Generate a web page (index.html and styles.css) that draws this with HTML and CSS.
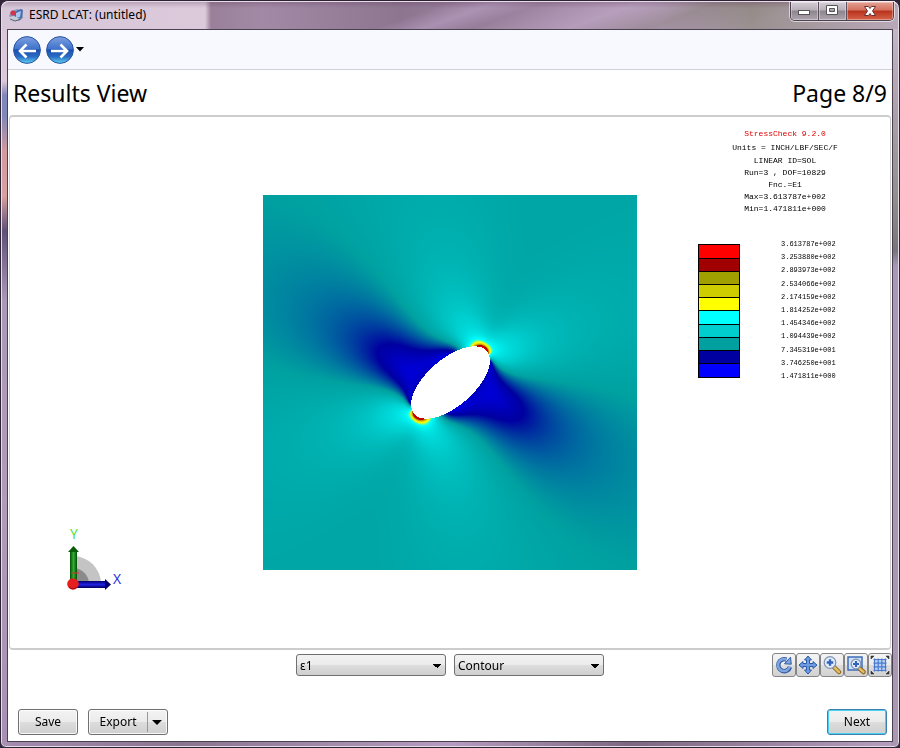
FILE: index.html
```html
<!DOCTYPE html>
<html lang="en">
<head>
<meta charset="utf-8">
<title>ESRD LCAT: (untitled)</title>
<link rel="stylesheet" href="styles.css">
</head>
<body>
<div class="window">
  <header class="titlebar">
    <svg class="app-icon" viewBox="0 0 16 16" aria-hidden="true">
      <path d="M1 9l2-5 6-2 5 1 1 8-4 3-7 0z" fill="#8b9cc0"/>
      <path d="M6 5l7-3 2 1-1 8-7 2z" fill="#4a6cae"/>
      <path d="M8 6l5-2-1 6-4 1z" fill="#a9c6ee"/>
      <path d="M1 10l5-1 6 3-5 3-4-1z" fill="#c6cad4"/>
      <circle cx="5" cy="6" r="2.6" fill="#d43348"/>
      <path d="M2 12l5 2 6-2" fill="none" stroke="#5b6278"/>
    </svg>
    <span class="window-title">ESRD LCAT: (untitled)</span>
    <div class="caption-buttons">
      <button type="button" class="caption" aria-label="Minimize"><svg viewBox="0 0 26 18"><rect x="7.500" y="8.500" width="11" height="4" fill="#fff" stroke="#555"/></svg></button>
      <button type="button" class="caption" aria-label="Maximize"><svg viewBox="0 0 26 18"><path d="M7.500 3.500h11v9h-11zM10.500 6.500v3h5v-3z" fill="#fff" fill-rule="evenodd" stroke="#555"/></svg></button>
      <button type="button" class="caption close" aria-label="Close"><svg viewBox="0 0 46 18"><path d="M17.500 4.500h4l1.500 2 1.500-2h4l-3 4.500 3 4.500h-4l-1.500-2-1.500 2h-4l3-4.500z" fill="#fff" stroke="#633"/></svg></button>
    </div>
  </header>
  <main class="client">
    <nav class="toolbar">
      <button type="button" class="nav-button" aria-label="Back">
        <svg viewBox="0 0 28 28">
          <defs>
            <linearGradient id="orb" x1="0" y1="0" x2="0" y2="1"><stop offset="0" stop-color="#7f9fe0"/><stop offset=".45" stop-color="#3f74cc"/><stop offset=".5" stop-color="#1b4fae"/><stop offset=".75" stop-color="#2a6cc4"/><stop offset="1" stop-color="#62d4f4"/></linearGradient>
          </defs>
          <circle cx="14" cy="14" r="13.400" fill="url(#orb)" stroke="#2b55a0"/>
          <path d="M23 15H7M13.500 8.500L7 15l6.500 6.500" fill="none" stroke="#fff" stroke-width="2.600"/>
        </svg>
      </button>
      <button type="button" class="nav-button" aria-label="Forward">
        <svg viewBox="0 0 28 28">
          <circle cx="14" cy="14" r="13.400" fill="url(#orb)" stroke="#2b55a0"/>
          <path d="M5 15h16M14.500 8.500L21 15l-6.500 6.500" fill="none" stroke="#fff" stroke-width="2.600"/>
        </svg>
      </button>
      <button type="button" class="history" aria-label="Recent pages"><svg viewBox="0 0 8 5"><path d="M0 0h8L4 4.500z"/></svg></button>
    </nav>
    <div class="heading">
      <h1>Results View</h1>
      <span>Page 8/9</span>
    </div>
    <section class="viewport" aria-label="Model view">
      <div class="side-left">
        <svg class="triad" viewBox="0 0 70 70" role="img" aria-label="X and Y axes">
          <defs>
            <linearGradient id="gy"><stop offset="0" stop-color="#064d06"/><stop offset=".5" stop-color="#2fae2f"/><stop offset="1" stop-color="#064d06"/></linearGradient>
            <linearGradient id="gx" x1="0" y1="0" x2="0" y2="1"><stop offset="0" stop-color="#000070"/><stop offset=".5" stop-color="#2020e0"/><stop offset="1" stop-color="#000060"/></linearGradient>
          </defs>
          <path d="M13 29a28 28 0 0 1 28 28H13z" fill="#c4c4c4"/>
          <path d="M13 41a16 16 0 0 1 16 16H13z" fill="#8b8b8b"/>
          <rect x="10" y="24" width="7" height="30" fill="url(#gy)"/>
          <path d="M8 25L13.500 19l5.500 6z" fill="#0a5c0a"/>
          <rect x="17" y="54" width="28" height="7" fill="url(#gx)"/>
          <path d="M45 52L51 57.500l-6 5.500z" fill="#00006c"/>
          <path d="M11 46h8" stroke="#d33" stroke-width="1"/>
          <circle cx="13" cy="57" r="5.800" fill="#e61e1e"/>
          <path d="M9 60a5.500 5.500 0 0 0 8 0" fill="none" stroke="#a01010"/>
          <text x="10" y="12" class="axis axis-y">Y</text>
          <text x="53" y="57" class="axis axis-x">X</text>
        </svg>
      </div>
      <canvas id="field" width="374" height="375" role="img" aria-label="Strain contour around an elliptical hole"></canvas>
      <div class="side-right">
        <div class="info">
          <p class="product">StressCheck 9.2.0</p>
          <p class="units">Units = INCH/LBF/SEC/F</p>
          <p>LINEAR ID=SOL</p>
          <p>Run=3 , DOF=10829</p>
          <p>Fnc.=E1</p>
          <p>Max=3.613787e+002</p>
          <p>Min=1.471811e+000</p>
        </div>
        <div class="legend">
          <div class="swatches">
            <i class="c0"></i><i class="c1"></i><i class="c2"></i><i class="c3"></i><i class="c4"></i><i class="c5"></i><i class="c6"></i><i class="c7"></i><i class="c8"></i><i class="c9"></i>
          </div>
          <div class="levels">
            <span>3.613787e+002</span><span>3.253880e+002</span><span>2.893973e+002</span><span>2.534066e+002</span><span>2.174159e+002</span><span>1.814252e+002</span><span>1.454346e+002</span><span>1.094439e+002</span><span>7.345319e+001</span><span>3.746250e+001</span><span>1.471811e+000</span>
          </div>
        </div>
      </div>
    </section>
    <div class="controls">
      <div class="selects">
        <select aria-label="Function"><option>ε1</option></select>
        <select aria-label="Plot type"><option>Contour</option></select>
      </div>
      <div class="view-tools">
        <button type="button" aria-label="Rotate"><svg viewBox="0 0 20 20"><path d="M12.500 4.600A6 6 0 1 0 16 12" fill="none" stroke="#2f5a9e" stroke-width="4.400"/><path d="M12.500 4.600A6 6 0 1 0 15.800 11.500" fill="none" stroke="#7fa6e0" stroke-width="2.600"/><path d="M10.500 8.800l6.800.4-.8-7z" fill="#7fa6e0" stroke="#2f5a9e"/></svg></button>
        <button type="button" aria-label="Pan"><svg viewBox="0 0 20 20"><path d="M10 1l3.500 4h-2v3.500H15v-2l4 3.500-4 3.500v-2h-3.500V15h2L10 19l-3.500-4h2v-3.500H5v2L1 10l4-3.500v2h3.500V5h-2z" fill="#6c9be0" stroke="#2c5aa8"/></svg></button>
        <button type="button" aria-label="Zoom"><svg viewBox="0 0 20 20"><path d="M12 12l5 5" stroke="#8a6420" stroke-width="4.500" stroke-linecap="round"/><path d="M12.500 12.500l4.500 4.500" stroke="#e3bd62" stroke-width="2.500" stroke-linecap="round"/><circle cx="8" cy="7.500" r="5.800" fill="#e4eefb" stroke="#8094b4" stroke-width="1.300"/><path d="M8 4.200v6.600M4.700 7.500h6.600" stroke="#3564c0" stroke-width="2.400"/></svg></button>
        <button type="button" aria-label="Zoom to area"><svg viewBox="0 0 20 20"><rect x="2" y="2" width="14" height="13" fill="#cfe0f7" stroke="#3e6cb6" stroke-width="1.500"/><path d="M13 13l4.500 4" stroke="#8a6420" stroke-width="4.500" stroke-linecap="round"/><path d="M13.500 13.500l4 3.500" stroke="#e3bd62" stroke-width="2.500" stroke-linecap="round"/><circle cx="10" cy="9" r="4.800" fill="#e4eefb" stroke="#7c93b8" stroke-width="1.300"/><path d="M10 6v6M7 9h6" stroke="#3564c0" stroke-width="2.200"/></svg></button>
        <button type="button" aria-label="Fit to view"><svg viewBox="0 0 20 20"><rect x="4" y="4" width="12" height="12" fill="#b9d1f5"/><path d="M4.500 3.500v13M8.200 3.500v13M11.800 3.500v13M15.500 3.500v13M3.500 4.500h13M3.500 8.200h13M3.500 11.800h13M3.500 15.500h13" stroke="#4a7ad0" stroke-width="1.200"/><path d="M1 1h3L1 4zM19 1v3l-3-3zM1 19v-3l3 3zM19 19h-3l3-3z" fill="#333" stroke="#333" stroke-width=".6"/></svg></button>
      </div>
    </div>
    <footer class="actions">
      <button type="button" class="button">Save</button>
      <div class="split">
        <button type="button" class="split-main">Export</button>
        <button type="button" class="split-arrow" aria-label="Export options"><svg viewBox="0 0 10 5"><path d="M0 0h10L5 5z"/></svg></button>
      </div>
      <button type="button" class="button next">Next</button>
    </footer>
  </main>
</div>
<script src="field.js"></script>
</body>
</html>
```
FILE: styles.css
```css
* { box-sizing: border-box; }
body { margin: 0; background: #30243a; font: 12px/16px "Noto Sans", sans-serif; color: #000; }
button, select { font: inherit; color: inherit; margin: 0; padding: 0; }
h1, p { margin: 0; font-weight: 400; }
svg { display: block; }

.window {
  min-height: 100vh;
  display: flex;
  flex-direction: column;
  padding: 0 6px 5px;
  border: 1px solid #2c2234;
  border-radius: 8px 8px 6px 6px;
  box-shadow: inset 0 0 0 1px #e6dcea;
  background:
    linear-gradient(180deg, #d6c6d8 0, #dcc8d8 80px, #8088b8 94px, #8088b8 115px, #d09aa0 150px, #d8a0a0 195px, #5f5078 230px, #a999b8 300px, #b09bb8 500px, #a890b4 100%) left / 8px 100% no-repeat,
    linear-gradient(180deg, #cbbfd0 0, #b5a8b4 80px, #8f8f88 200px, #77777a 250px, #a898b8 265px, #a898b0 100%) right / 8px 100% no-repeat,
    linear-gradient(90deg, #a58cb0, #8a7590 20%, #b69cc0 50%, #7d6780 70%, #b79fc0 100%) bottom / 100% 8px no-repeat,
    #d0bdd0;
}
.titlebar {
  display: flex;
  align-items: flex-start;
  height: 28px;
  margin: 0 -5px;
  padding: 0 4px 0 6px;
  border-radius: 7px 7px 0 0;
  border-top: 1px solid #e6dcea;
  background:
    linear-gradient(180deg, rgba(90, 50, 80, .25) 0, rgba(90, 50, 80, 0) 6px),
    linear-gradient(160deg, rgba(150, 125, 160, 0) 46%, rgba(180, 155, 190, .7) 51%, rgba(140, 115, 140, .2) 56%, rgba(190, 165, 195, .6) 66%, rgba(130, 120, 110, .4) 74%, rgba(0, 0, 0, 0) 84%),
    linear-gradient(90deg, #d6c6d8 0, #dccadb 203px, #9a8099 209px, #a28aa6 260px, #8d7590 400px, #a68dab 560px, #b29dba 660px, #99908f 750px, #b9a8b8 100%);
}
.app-icon { width: 16px; height: 16px; margin-top: 5px; }
.window-title { margin: 5px auto 0 5px; line-height: 16px; }
.caption-buttons {
  display: flex;
  height: 19px;
  border: 1px solid #4b4150;
  border-top: 0;
  border-radius: 0 0 5px 5px;
  overflow: hidden;
  box-shadow: 0 0 0 1px rgba(255, 255, 255, .6);
}
.caption {
  width: 28px;
  border: 0;
  border-right: 1px solid #5a505c;
  background: linear-gradient(180deg, #d5ced6 0, #b8afb9 45%, #8d858d 50%, #aea5ae 100%);
  box-shadow: inset 0 0 0 1px rgba(255, 255, 255, .35);
}
.caption svg { width: 26px; height: 18px; }
.caption.close { width: 46px; border-right: 0; background: linear-gradient(180deg, #e3a294 0, #d4705c 45%, #b8321c 50%, #d5644a 100%); }
.close svg { width: 46px; }

.client {
  flex: 1;
  display: flex;
  flex-direction: column;
  border: 1px solid #4a4150;
  background: #fff;
}
.toolbar {
  display: flex;
  align-items: center;
  gap: 5px;
  height: 40px;
  padding-left: 5px;
  background: #f8f9ff;
  border-bottom: 1px solid #d0d2d8;
}
.nav-button, .history { border: 0; background: none; }
.nav-button svg { width: 28px; height: 28px; }
.history { margin-left: -3px; }
.history svg { width: 8px; height: 5px; }
.heading {
  display: flex;
  justify-content: space-between;
  align-items: center;
  height: 45px;
  padding: 0 5px;
  font-size: 23px;
  line-height: 30px;
}
h1 { font-size: 23px; }

.viewport {
  flex: 1;
  display: grid;
  grid-template-columns: 1fr 374px 1fr;
  margin: 0 1px;
  border: 2px solid #ccc;
  border-right-width: 1px;
  border-left-width: 1px;
  border-radius: 4px;
}
#field { display: block; align-self: start; margin-top: 78px; }
.side-left { display: flex; align-items: flex-end; padding: 0 0 51px 50px; }
.triad { width: 70px; height: 70px; }
.axis { font-family: "Open Sans", sans-serif; font-size: 14px; }
.axis-y { fill: #3fdc3f; }
.axis-x { fill: #2424e0; }
.side-right { padding-top: 11px; font-family: "Liberation Mono", monospace; }
.info { padding-left: 43px; text-align: center; font-size: 8px; line-height: 12px; }
.product { margin-bottom: 2px; color: #d00; }
.units { margin-bottom: 1px; }
.legend { display: flex; align-items: center; gap: 41px; margin: 23px 0 0 61px; }
.swatches { display: grid; grid-auto-rows: 1fr; width: 42px; height: 134px; border: 1px solid #000; background: #00f; }
.swatches i + i { border-top: 1px solid #000; }
.levels { display: grid; grid-auto-rows: 1fr; height: 145px; align-items: center; font-size: 7px; line-height: 9px; }
.c0 { background: #f00; }
.c1 { background: #a00000; }
.c2 { background: #a0a000; }
.c3 { background: #cdcd00; }
.c4 { background: #ff0; }
.c5 { background: #0ff; }
.c6 { background: #00cdcd; }
.c7 { background: #00a0a0; }
.c8 { background: #0000a0; }
.c9 { background: #00f; }

.controls {
  display: grid;
  grid-template-columns: 1fr auto 1fr;
  align-items: start;
  padding-top: 4px;
  height: 59px;
}
.selects { grid-column: 2; display: flex; gap: 8px; }
select {
  appearance: none;
  width: 150px;
  height: 22px;
  padding: 1px 20px 0 3px;
  border: 1px solid #707070;
  border-radius: 3px;
  background:
    conic-gradient(from 315deg at 50% 100%, #000 90deg, transparent 0) right 4px top 9px / 8px 4px no-repeat,
    linear-gradient(#f2f2f2, #ebebeb 50%, #ddd 50%, #cfcfcf);
}
.view-tools { justify-self: end; display: flex; }
.view-tools button {
  width: 24px;
  height: 24px;
  margin-top: -1px;
  padding: 1px;
  border: 1px solid #858585;
  border-radius: 3px;
  background: linear-gradient(#f4f4f4, #ebebeb 50%, #dedede 50%, #d2d2d2);
}
.view-tools svg { width: 20px; height: 20px; }

.actions { display: flex; gap: 10px; padding: 0 5px 6px 10px; }
.button, .split {
  height: 26px;
  border: 1px solid #707070;
  border-radius: 3px;
  background: linear-gradient(#f3f3f3, #ebebeb 50%, #ddd 50%, #cfcfcf);
  box-shadow: inset 0 0 0 1px rgba(255, 255, 255, .8);
}
.button { width: 60px; }
.split { display: flex; align-items: center; width: 80px; }
.split button { border: 0; background: none; }
.split .split-main { flex: 1; }
.split .split-arrow { height: 20px; padding: 0 5px 0 4px; border-left: 1px solid #999; }
.split-arrow svg { width: 10px; height: 5px; }
.next { margin-left: auto; border-color: #3c7fb1; box-shadow: inset 0 0 0 1px #48d2f4; }
```
FILE: field.js
```js
// Principal strain around an inclined elliptical hole in a plate under tension,
// from the complex-potential solution. Complex numbers are [re, im] pairs.
const mul = (a, b) => [a[0] * b[0] - a[1] * b[1], a[0] * b[1] + a[1] * b[0]];
const div = (a, b) => {
  const d = b[0] * b[0] + b[1] * b[1];
  return [(a[0] * b[0] + a[1] * b[1]) / d, (a[1] * b[0] - a[0] * b[1]) / d];
};
const add = (a, b) => [a[0] + b[0], a[1] + b[1]];
const sub = (a, b) => [a[0] - b[0], a[1] - b[1]];
const sc = (a, k) => [a[0] * k, a[1] * k];
const sqrt = a => {
  const r = Math.hypot(a[0], a[1]);
  const x = Math.sqrt(Math.max(0, (r + a[0]) / 2));
  const y = Math.sqrt(Math.max(0, (r - a[0]) / 2));
  return [x, a[1] < 0 ? -y : y];
};

// [level, r, g, b]
const stops = [
  [-15, 0, 0, 255], [46, 0, 0, 160], [90, 0, 160, 160], [130, 0, 205, 205], [195, 0, 255, 255],
  [235, 255, 255, 0], [262, 225, 205, 0], [290, 200, 130, 0], [320, 160, 0, 0], [370, 220, 0, 0]
];
function color(v) {
  if (v <= stops[0][0]) return stops[0].slice(1);
  for (let i = 1; i < stops.length; i++) {
    if (v < stops[i][0]) {
      const p = stops[i - 1], q = stops[i], t = (v - p[0]) / (q[0] - p[0]);
      return [1, 2, 3].map(k => p[k] + (q[k] - p[k]) * t);
    }
  }
  return stops[stops.length - 1].slice(1);
}

const A = 48, B = 23.5;              // semi-axes
const R = (A + B) / 2, m = (A - B) / (A + B);
const tilt = 41 * Math.PI / 180;     // major axis
const load = 153 * Math.PI / 180;    // tension direction
const poisson = 0.33, farStrain = 94;

function strain(x, y) {
  const z = [x * Math.cos(tilt) + y * Math.sin(tilt), -x * Math.sin(tilt) + y * Math.cos(tilt)];
  let s = sqrt(sub(mul(z, z), [4 * R * R * m, 0]));
  if (s[0] * z[0] + s[1] * z[1] < 0) s = sc(s, -1);
  const w = sc(add(z, s), 1 / (2 * R));
  if (w[0] * w[0] + w[1] * w[1] < 1 || (z[0] / A) ** 2 + (z[1] / B) ** 2 < 1) return null;
  const w2 = mul(w, w);
  const al = load - tilt;
  const e = [Math.cos(2 * al), Math.sin(2 * al)];
  const c = [2 * e[0] - m, 2 * e[1]];
  const d = [w2[0] - m, w2[1]];
  const om = sc(div(d, w2), R);
  const P = sc(div(sub(w2, c), d), 1 / 4);
  const dP = sc(div(mul(w, sub(c, [m, 0])), mul(d, d)), 1 / 2);
  const K = sc([e[0] - m, e[1]], (1 + m * m) / m);
  const psi = sc(add(sub([e[0], -e[1]], div(sc(e, 1 / m), w2)),
    div(mul(K, [w2[0] + m, w2[1]]), mul(d, d))), -R / 2);
  const q = sc(add(div(mul([z[0], -z[1]], dP), om), div(psi, om)), 2);
  const mean = 2 * P[0], r = Math.hypot(q[0], q[1]) / 2;
  return farStrain * (mean + r - poisson * (mean - r));
}

const canvas = document.getElementById('field');
const g = canvas.getContext('2d');
const im = g.createImageData(canvas.width, canvas.height);
for (let y = 0; y < canvas.height; y++) {
  for (let x = 0; x < canvas.width; x++) {
    const v = strain(x - 187, 187 - y);
    const c = v === null ? [255, 255, 255] : color(v);
    im.data.set([c[0], c[1], c[2], 255], (y * canvas.width + x) * 4);
  }
}
g.putImageData(im, 0, 0);
```
